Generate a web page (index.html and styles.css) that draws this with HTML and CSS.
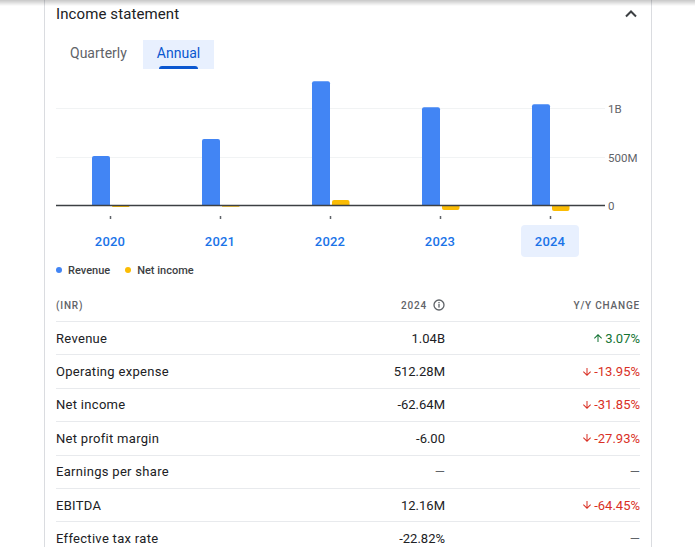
FILE: index.html
```html
<!DOCTYPE html>
<html lang="en">
<head>
<meta charset="utf-8">
<title>Income statement</title>
<link rel="stylesheet" href="styles.css">
</head>
<body>
<div class="top-shadow"></div>
<section class="card">
  <div class="card-header">
    <h2 class="title">Income statement</h2>
    <svg class="chevron" width="18" height="18" viewBox="0 0 18 18"><path d="M4 11.5 L9 6.5 L14 11.5" fill="none" stroke="#3c4043" stroke-width="2"/></svg>
  </div>
  <div class="tabs">
    <div class="tab">Quarterly</div>
    <div class="tab active">Annual</div>
  </div>
  <svg class="chart" width="584" height="150" viewBox="0 0 584 150">
    <line x1="0" y1="36.5" x2="549" y2="36.5" stroke="#f1f3f4" stroke-width="1"/>
    <line x1="0" y1="85.5" x2="549" y2="85.5" stroke="#f1f3f4" stroke-width="1"/>
    <g fill="#4285f4">
      <path d="M36 133 V86 Q36 84 38 84 H52 Q54 84 54 86 V133 Z"/>
      <path d="M146 133 V69 Q146 67 148 67 H162 Q164 67 164 69 V133 Z"/>
      <path d="M256 133 V11.3 Q256 9.3 258 9.3 H272 Q274 9.3 274 11.3 V133 Z"/>
      <path d="M366 133 V37.3 Q366 35.3 368 35.3 H382 Q384 35.3 384 37.3 V133 Z"/>
      <path d="M476 133 V34.3 Q476 32.3 478 32.3 H492 Q494 32.3 494 34.3 V133 Z"/>
    </g>
    <g fill="#fbbc04">
      <rect x="56" y="133" width="17.5" height="2" rx="1"/>
      <rect x="166" y="133" width="17.5" height="1.8" rx="0.9"/>
      <path d="M276 133 V130 Q276 128 278 128 H291.5 Q293.5 128 293.5 130 V133 Z"/>
      <path d="M386 133 V136 Q386 138 388 138 H401.5 Q403.5 138 403.5 136 V133 Z"/>
      <path d="M496 133 V137 Q496 139 498 139 H511.5 Q513.5 139 513.5 137 V133 Z"/>
    </g>
    <line x1="0" y1="133.5" x2="549" y2="133.5" stroke="#3c4043" stroke-width="1.5"/>
    <g stroke="#5f6368" stroke-width="1.5">
      <line x1="54.5" y1="144" x2="54.5" y2="147"/>
      <line x1="164.5" y1="144" x2="164.5" y2="147"/>
      <line x1="274.5" y1="144" x2="274.5" y2="147"/>
      <line x1="384.5" y1="144" x2="384.5" y2="147"/>
      <line x1="494.5" y1="144" x2="494.5" y2="147"/>
    </g>
    <g class="axis-label">
      <text x="552" y="40.5">1B</text>
      <text x="552" y="89.5">500M</text>
      <text x="552" y="137.5">0</text>
    </g>
  </svg>
  <div class="years">
    <div class="year"><span class="year-label">2020</span></div>
    <div class="year"><span class="year-label">2021</span></div>
    <div class="year"><span class="year-label">2022</span></div>
    <div class="year"><span class="year-label">2023</span></div>
    <div class="year"><span class="year-label selected">2024</span></div>
  </div>
  <div class="legend">
    <span class="legend-item"><span class="dot dot-blue"></span>Revenue</span>
    <span class="legend-item"><span class="dot dot-yellow"></span>Net income</span>
  </div>
  <div class="table">
    <div class="row head">
      <div class="cell">(INR)</div>
      <div class="cell num">2024 <svg class="info" width="12" height="12" viewBox="0 0 12 12"><circle cx="6" cy="6" r="5" fill="none" stroke="#5f6368" stroke-width="1.3"/><rect x="5.35" y="5" width="1.3" height="3.6" fill="#5f6368"/><rect x="5.35" y="3" width="1.3" height="1.3" fill="#5f6368"/></svg></div>
      <div class="cell num">Y/Y change</div>
    </div>
    <div class="row">
      <div class="cell label">Revenue</div>
      <div class="cell num">1.04B</div>
      <div class="cell num up"><svg class="arrow" width="12" height="12" viewBox="0 0 24 24"><path d="M4 12l1.41 1.41L11 7.83V20h2V7.83l5.58 5.59L20 12l-8-8-8 8z" fill="currentColor"/></svg>3.07%</div>
    </div>
    <div class="row">
      <div class="cell label">Operating expense</div>
      <div class="cell num">512.28M</div>
      <div class="cell num down"><svg class="arrow" width="12" height="12" viewBox="0 0 24 24"><path d="M20 12l-1.41-1.41L13 16.17V4h-2v12.17l-5.58-5.590L4 12l8 8 8-8z" fill="currentColor"/></svg>-13.95%</div>
    </div>
    <div class="row">
      <div class="cell label">Net income</div>
      <div class="cell num">-62.64M</div>
      <div class="cell num down"><svg class="arrow" width="12" height="12" viewBox="0 0 24 24"><path d="M20 12l-1.41-1.41L13 16.17V4h-2v12.17l-5.58-5.59L4 12l8 8 8-8z" fill="currentColor"/></svg>-31.85%</div>
    </div>
    <div class="row">
      <div class="cell label">Net profit margin</div>
      <div class="cell num">-6.00</div>
      <div class="cell num down"><svg class="arrow" width="12" height="12" viewBox="0 0 24 24"><path d="M20 12l-1.41-1.41L13 16.17V4h-2v12.17l-5.58-5.59L4 12l8 8 8-8z" fill="currentColor"/></svg>-27.93%</div>
    </div>
    <div class="row">
      <div class="cell label">Earnings per share</div>
      <div class="cell num dash">—</div>
      <div class="cell num dash">—</div>
    </div>
    <div class="row">
      <div class="cell label">EBITDA</div>
      <div class="cell num">12.16M</div>
      <div class="cell num down"><svg class="arrow" width="12" height="12" viewBox="0 0 24 24"><path d="M20 12l-1.41-1.41L13 16.17V4h-2v12.17l-5.58-5.59L4 12l8 8 8-8z" fill="currentColor"/></svg>-64.45%</div>
    </div>
    <div class="row">
      <div class="cell label">Effective tax rate</div>
      <div class="cell num">-22.82%</div>
      <div class="cell num dash">—</div>
    </div>
  </div>
</section>
</body>
</html>
```

FILE: styles.css
```css
* { box-sizing: border-box; }
html, body { margin: 0; padding: 0; background: #fff; }
body {
  font-family: Roboto, "Liberation Sans", Arial, sans-serif;
  color: #202124;
  overflow: hidden;
  height: 547px;
}
.top-shadow {
  position: fixed;
  left: 0; right: 0; top: 0;
  height: 6px;
  background: linear-gradient(rgba(0,0,0,0.22), rgba(0,0,0,0));
  pointer-events: none;
  z-index: 2;
}
.card {
  margin-left: 44px;
  width: 608px;
  border-left: 1px solid #dadce0;
  border-right: 1px solid #dadce0;
  padding: 0 11px;
  min-height: 547px;
}
.card-header {
  height: 28px;
  display: flex;
  align-items: center;
  justify-content: space-between;
}
.title {
  margin: 0;
  font-size: 15px;
  font-weight: 400;
  line-height: 20px;
  letter-spacing: 0.1px;
  color: #202124;
}
.chevron { display: block; }
.tabs {
  margin-top: 12px;
  display: flex;
  gap: 2px;
}
.tab {
  height: 29px;
  padding: 0 14px 3px;
  display: flex;
  align-items: center;
  font-size: 14px;
  color: #5f6368;
  position: relative;
}
.tab.active {
  background: #e8f0fe;
  color: #0b57d0;
}
.tab.active::after {
  content: "";
  position: absolute;
  left: 16px;
  right: 16px;
  bottom: 0;
  height: 3px;
  border-radius: 3px 3px 0 0;
  background: #0b57d0;
}
.chart {
  display: block;
  margin-top: 3px;
}
.axis-label text {
  font-family: Roboto, "Liberation Sans", Arial, sans-serif;
  font-size: 11.5px;
  fill: #5f6368;
}
.years {
  margin-top: 3px;
  display: flex;
  margin-left: -1px;
}
.year {
  width: 110px;
  height: 32px;
  display: flex;
  justify-content: center;
}
.year-label {
  width: 58px;
  height: 32px;
  border-radius: 4px;
  display: flex;
  align-items: center;
  justify-content: center;
  font-size: 13px;
  font-weight: 500;
  color: #1a73e8;
  letter-spacing: 0.2px;
}
.year-label.selected {
  background: #e8f0fe;
}
.legend {
  margin-top: 6px;
  display: flex;
  gap: 15px;
  height: 14px;
  align-items: center;
  font-size: 11px;
  font-weight: 500;
  color: #3c4043;
}
.legend-item { display: flex; align-items: center; }
.dot {
  width: 6px;
  height: 6px;
  border-radius: 50%;
  margin-right: 6px;
}
.dot-blue { background: #4285f4; }
.dot-yellow { background: #fbbc04; }
.table { margin-top: 12px; }
.row {
  display: grid;
  grid-template-columns: 1fr 120px 195px;
  align-items: center;
  height: 33.4px;
  border-top: 1px solid #e8eaed;
  font-size: 13px;
  font-weight: 400;
}
.label {
  letter-spacing: 0.3px;
  color: #202124;
}
.row.head {
  height: 32px;
  border-top: none;
  font-size: 10px;
  font-weight: 500;
  letter-spacing: 0.8px;
  text-transform: uppercase;
  color: #5f6368;
}
.cell { white-space: nowrap; }
.num {
  display: flex;
  justify-content: flex-end;
  align-items: center;
}
.info { margin-left: 6px; }
.up { color: #137333; }
.down { color: #d93025; }
.arrow { margin-right: 1px; }
.dash { color: #5f6368; }
```
